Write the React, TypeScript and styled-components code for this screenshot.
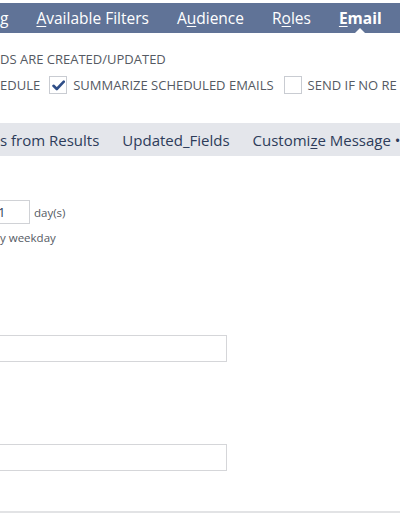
import React from "react";
import styled, { createGlobalStyle } from "styled-components";

const Global = createGlobalStyle`
  html, body {
    margin: 0;
    padding: 0;
    background: #ffffff;
    overflow: hidden;
  }
  body {
    font-family: "Open Sans", "Liberation Sans", sans-serif;
  }
`;

const Page = styled.div`
  width: 400px;
  height: 516px;
  overflow: hidden;
  position: relative;
  padding-top: 3px;
  box-sizing: border-box;
`;

const TabBar = styled.div`
  height: 30px;
  background: #607397;
  display: flex;
  align-items: center;
  gap: 28px;
  white-space: nowrap;
  position: relative;
`;

const Tab = styled.div<{ $active?: boolean }>`
  color: #ffffff;
  font-size: 15.5px;
  font-weight: ${(p) => (p.$active ? 700 : 400)};
  position: relative;
  height: 30px;
  line-height: 30px;

  u {
    text-decoration-thickness: 1px;
    text-underline-offset: 2px;
  }

  ${(p) =>
    p.$active &&
    `
    &::after {
      content: "";
      position: absolute;
      left: 50%;
      bottom: 0;
      margin-left: -5px;
      border-left: 5px solid transparent;
      border-right: 5px solid transparent;
      border-bottom: 5px solid #ffffff;
    }
  `}
`;

const Section = styled.div`
  padding-top: 16px;
  display: flex;
  flex-direction: column;
`;

const Caps = styled.span`
  font-size: 13px;
  color: #555a63;
  text-transform: uppercase;
  white-space: nowrap;
`;

const CapsLine = styled.div`
  height: 18px;
  line-height: 18px;
`;

const CheckRow = styled.div`
  display: flex;
  align-items: center;
  margin-top: 9px;
  height: 18px;
  white-space: nowrap;
`;

const Box = styled.span<{ $gap: number }>`
  width: 18px;
  height: 18px;
  border: 1px solid #c9ccd2;
  box-sizing: border-box;
  background: #fff;
  display: inline-flex;
  align-items: center;
  justify-content: center;
  margin: 0 6px 0 ${(p) => p.$gap}px;
  flex: none;
`;

const SubTabBar = styled.div`
  margin-top: 29px;
  height: 33px;
  background: #e4e6eb;
  display: flex;
  align-items: center;
  gap: 23px;
  white-space: nowrap;
`;

const SubTab = styled.div`
  color: #2d3c5a;
  font-size: 15px;

  u {
    text-decoration-thickness: 1px;
    text-underline-offset: 2px;
  }
`;

const Form = styled.div`
  padding-top: 44px;
  display: flex;
  flex-direction: column;
`;

const DayRow = styled.div`
  display: flex;
  align-items: center;
  gap: 4px;
  height: 24px;
`;

const SmallInput = styled.div`
  width: 50px;
  height: 24px;
  margin-left: -20px;
  border: 1px solid #d0d2d6;
  box-sizing: border-box;
  font-size: 13px;
  line-height: 22px;
  color: #2d3c5a;
  padding-left: 17px;
`;

const Small = styled.span`
  font-size: 11.5px;
  color: #555a63;
  white-space: nowrap;
`;

const Hint = styled.div`
  margin-top: 4px;
  height: 16px;
  line-height: 16px;
`;

const TextField = styled.div<{ $top: number }>`
  margin-top: ${(p) => p.$top}px;
  margin-left: -10px;
  width: 237px;
  height: 27px;
  border: 1px solid #d5d6d9;
  box-sizing: border-box;
  background: #fff;
`;

const Rule = styled.div`
  margin-top: 40px;
  height: 2px;
  background: #e2e3e5;
`;

const Check = () => (
  <svg width="13" height="11" viewBox="0 0 13 11">
    <path
      d="M1.5 5.8 L4.8 9 L11.8 1.6"
      fill="none"
      stroke="#2f4e88"
      strokeWidth="2.6"
      strokeLinecap="round"
      strokeLinejoin="round"
    />
  </svg>
);

export default function App() {
  return (
    <Page>
      <Global />
      <TabBar>
        <Tab>g</Tab>
        <Tab>
          <u>A</u>vailable Filters
        </Tab>
        <Tab>
          A<u>u</u>dience
        </Tab>
        <Tab>
          R<u>o</u>les
        </Tab>
        <Tab $active>
          <u>E</u>mail
        </Tab>
      </TabBar>

      <Section>
        <CapsLine>
          <Caps>DS ARE CREATED/UPDATED</Caps>
        </CapsLine>
        <CheckRow>
          <Caps>EDULE</Caps>
          <Box $gap={9}>
            <Check />
          </Box>
          <Caps>SUMMARIZE SCHEDULED EMAILS</Caps>
          <Box $gap={10} />
          <Caps>SEND IF NO RE</Caps>
        </CheckRow>
      </Section>

      <SubTabBar>
        <SubTab>s from Results</SubTab>
        <SubTab>Updated_Fields</SubTab>
        <SubTab>
          Customi<u>z</u>e Message •
        </SubTab>
      </SubTabBar>

      <Form>
        <DayRow>
          <SmallInput>1</SmallInput>
          <Small>day(s)</Small>
        </DayRow>
        <Hint>
          <Small>y weekday</Small>
        </Hint>
        <TextField $top={91} />
        <TextField $top={82} />
        <Rule />
      </Form>
    </Page>
  );
}
